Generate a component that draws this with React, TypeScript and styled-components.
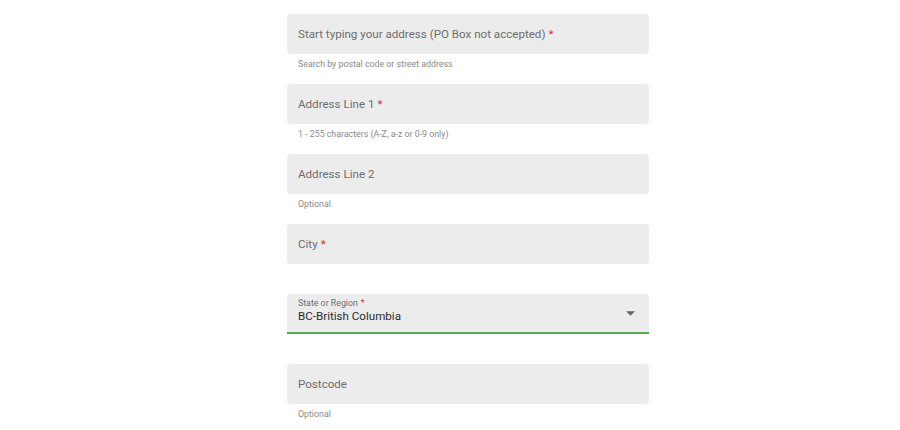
import React from "react";
import styled, { createGlobalStyle } from "styled-components";

const Global = createGlobalStyle`
  html, body { margin: 0; padding: 0; background: #ffffff; }
  body { font-family: Roboto, "Liberation Sans", Arial, sans-serif; }
`;

const Page = styled.div`
  width: 900px;
  height: 430px;
  display: flex;
  padding: 14px 0 0 287px;
  box-sizing: border-box;
  overflow: hidden;
`;

const Form = styled.div`
  width: 362px;
  display: flex;
  flex-direction: column;
`;

const Group = styled.div`
  height: 70px;
  flex: 0 0 70px;
  display: flex;
  flex-direction: column;
`;

const Field = styled.div<{ $active?: boolean }>`
  position: relative;
  height: 40px;
  flex: 0 0 40px;
  box-sizing: border-box;
  background: #ececec;
  border-radius: ${(p) => (p.$active ? "4px 4px 0 0" : "4px")};
  border-bottom: ${(p) => (p.$active ? "2px solid #4caf50" : "none")};
  display: flex;
  align-items: ${(p) => (p.$active ? "flex-start" : "center")};
  padding: 0 11px;
`;

const Placeholder = styled.span`
  font-size: 11.6px;
  color: #6e6e6e;
`;

const Req = styled.span`
  color: #d32f2f;
  margin-left: 3px;
`;

const SelectBody = styled.div`
  display: flex;
  flex-direction: column;
  flex: 1;
  padding-top: 4px;
`;

const SmallLabel = styled.span`
  font-size: 8.8px;
  color: #6e6e6e;
  line-height: 11px;
`;

const Value = styled.span`
  font-size: 11.6px;
  color: #2b2b2b;
  line-height: 15px;
`;

const Caret = styled.svg`
  position: absolute;
  right: 14px;
  top: 17px;
`;

const Helper = styled.div`
  font-size: 8.8px;
  color: #8a8a8a;
  padding: 5px 0 0 11px;
  line-height: 11px;
`;

const Required = () => <Req>*</Req>;

export default function App() {
  return (
    <>
      <Global />
      <Page>
        <Form>
          <Group>
            <Field>
              <Placeholder>
                Start typing your address (PO Box not accepted)
                <Required />
              </Placeholder>
            </Field>
            <Helper>Search by postal code or street address</Helper>
          </Group>
          <Group>
            <Field>
              <Placeholder>
                Address Line 1<Required />
              </Placeholder>
            </Field>
            <Helper>1 - 255 characters (A-Z, a-z or 0-9 only)</Helper>
          </Group>
          <Group>
            <Field>
              <Placeholder>Address Line 2</Placeholder>
            </Field>
            <Helper>Optional</Helper>
          </Group>
          <Group>
            <Field>
              <Placeholder>
                City<Required />
              </Placeholder>
            </Field>
          </Group>
          <Group>
            <Field $active>
              <SelectBody>
                <SmallLabel>
                  State or Region<Required />
                </SmallLabel>
                <Value>BC-British Columbia</Value>
              </SelectBody>
              <Caret width="9" height="5" viewBox="0 0 10 5">
                <path d="M0 0 L10 0 L5 5 Z" fill="#666666" />
              </Caret>
            </Field>
          </Group>
          <Group>
            <Field>
              <Placeholder>Postcode</Placeholder>
            </Field>
            <Helper>Optional</Helper>
          </Group>
        </Form>
      </Page>
    </>
  );
}
